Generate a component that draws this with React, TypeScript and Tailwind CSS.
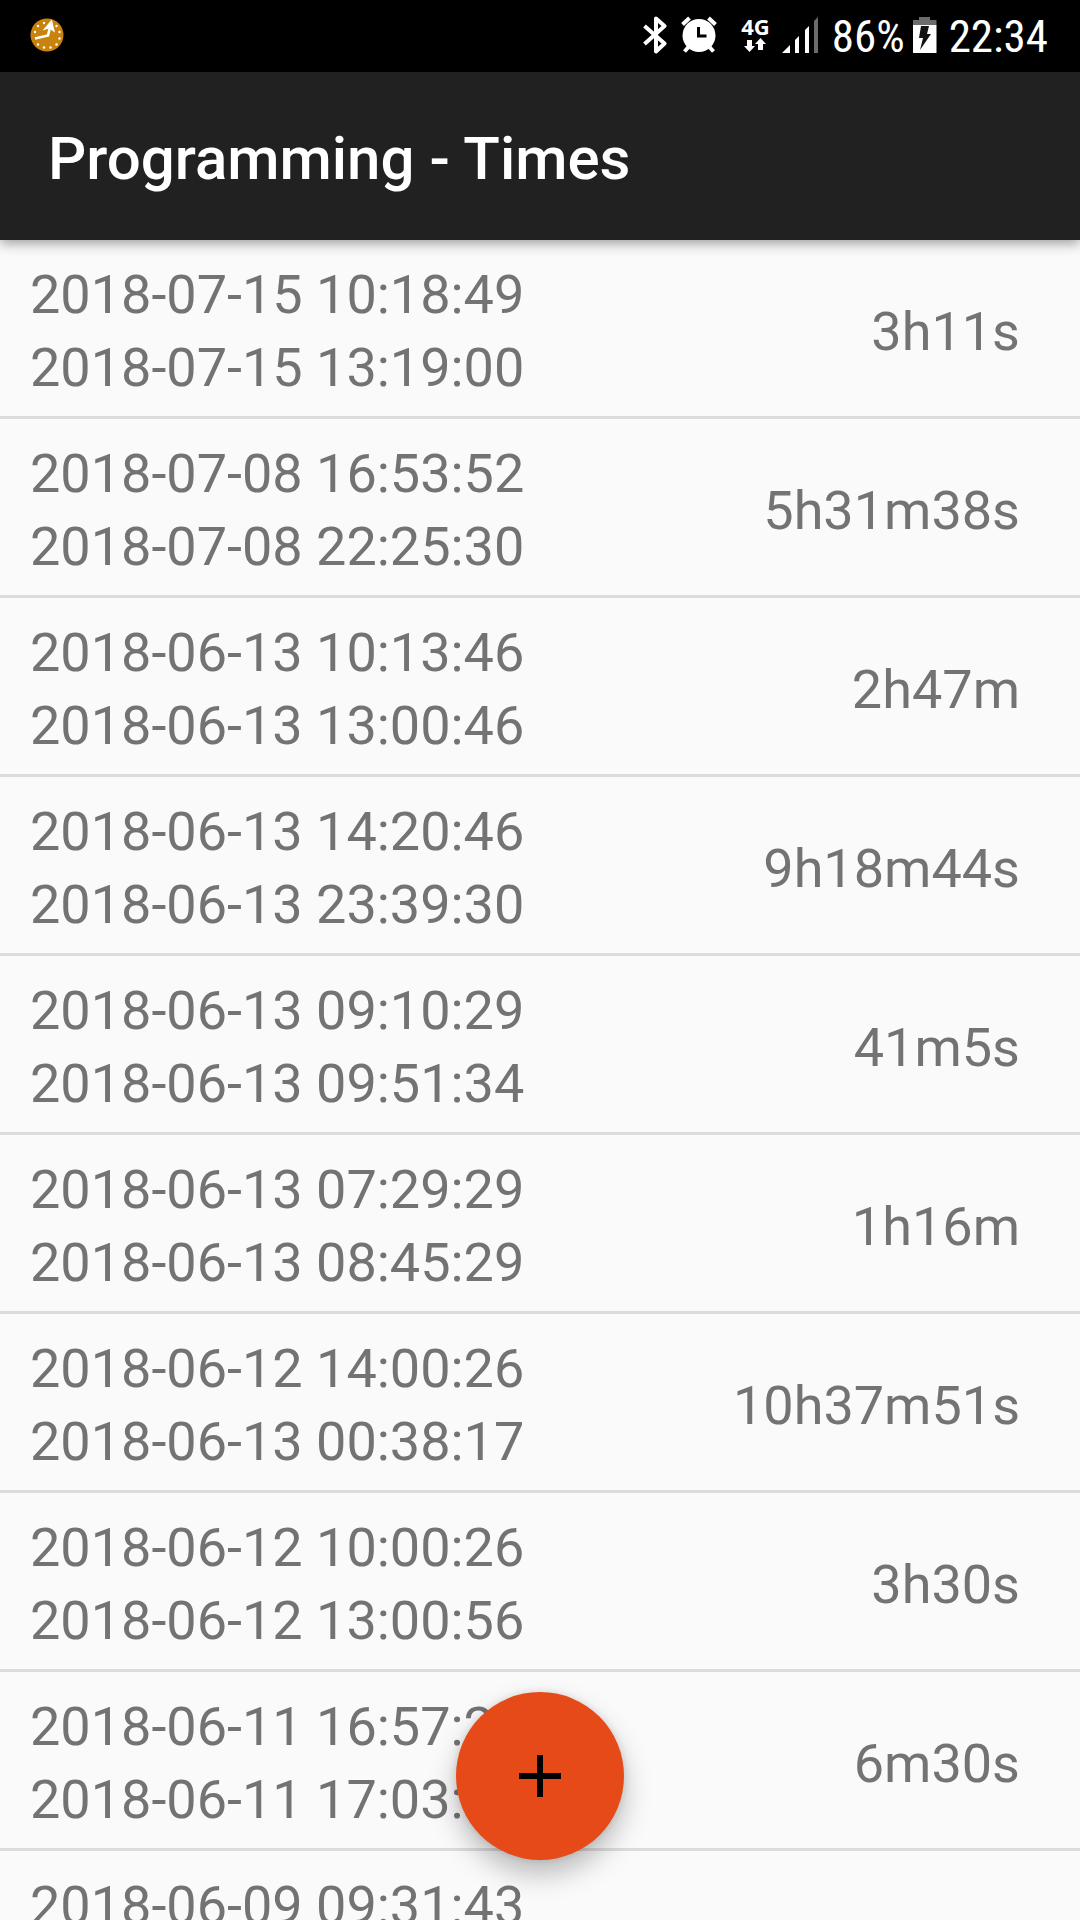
type Entry = { start: string; end?: string; duration?: string };

const entries: Entry[] = [
  { start: "2018-07-15 10:18:49", end: "2018-07-15 13:19:00", duration: "3h11s" },
  { start: "2018-07-08 16:53:52", end: "2018-07-08 22:25:30", duration: "5h31m38s" },
  { start: "2018-06-13 10:13:46", end: "2018-06-13 13:00:46", duration: "2h47m" },
  { start: "2018-06-13 14:20:46", end: "2018-06-13 23:39:30", duration: "9h18m44s" },
  { start: "2018-06-13 09:10:29", end: "2018-06-13 09:51:34", duration: "41m5s" },
  { start: "2018-06-13 07:29:29", end: "2018-06-13 08:45:29", duration: "1h16m" },
  { start: "2018-06-12 14:00:26", end: "2018-06-13 00:38:17", duration: "10h37m51s" },
  { start: "2018-06-12 10:00:26", end: "2018-06-12 13:00:56", duration: "3h30s" },
  { start: "2018-06-11 16:57:20", end: "2018-06-11 17:03:50", duration: "6m30s" },
  { start: "2018-06-09 09:31:43" },
];

const clockDots = [
  [44, 23], [38, 26], [35, 32], [38, 44.5], [44, 47.5],
  [50.5, 47.5], [56.5, 44.5], [59.5, 38.5], [59.5, 32], [56.5, 26],
];

function ClockNotification() {
  return (
    <svg className="h-[34px] w-[34px]" viewBox="30 18 34 34" aria-hidden="true">
      <circle cx="47" cy="35" r="16.5" fill="#c8830c" />
      {clockDots.map(([x, y]) => (
        <circle key={`${x}-${y}`} cx={x} cy={y} r="1.2" fill="#fff" />
      ))}
      <path d="M35 38.5L48 35.5L50.5 25" fill="none" stroke="#fff" strokeWidth="2.6" />
      <path d="M51.8 19.5L42.5 30.5L49 28.5L55 32.5Z" fill="#fff" />
    </svg>
  );
}

function Bluetooth() {
  return (
    <svg className="h-[38px] w-[24px]" viewBox="0 0 24 38" fill="none" stroke="#fff" strokeWidth="4" aria-label="Bluetooth">
      <path d="M1.5 10L21.5 27.5L13 35.5V2.5L21.5 10L1.5 28" strokeLinejoin="round" />
    </svg>
  );
}

function Alarm() {
  return (
    <svg className="h-[38px] w-[36px]" viewBox="0 0 36 38" fill="none" stroke="#fff" strokeWidth="4" aria-label="Alarm">
      <circle cx="18" cy="19.5" r="16.5" fill="#fff" stroke="none" />
      <path d="M1.5 8.5L8.5 2M34.5 8.5L27.5 2M3.5 35.5L8 30.5M32.5 35.5L28 30.5" />
      <path d="M17.5 11V20H25.5" stroke="#000" strokeWidth="3" />
    </svg>
  );
}

function MobileData() {
  return (
    <div className="flex flex-col items-center gap-1">
      <span className="font-['Noto_Sans',sans-serif] text-[22px] leading-[16px] font-bold">4G</span>
      <svg className="h-[14px] w-[22px]" viewBox="0 0 22 14" fill="#fff" aria-hidden="true">
        <path d="M3 2H8V8H11L5.5 14L0 8H3ZM14 12H19V6H22L16.5 0L11 6H14Z" />
      </svg>
    </div>
  );
}

function Signal() {
  return (
    <svg className="h-[36px] w-[36px]" viewBox="0 0 36 36" fill="#fff" aria-label="Signal">
      <path d="M0 36L8 28V36ZM13 23L17 19V36H13ZM23 13L27 9V36H23Z" />
      <path d="M32 4L36 0V36H32Z" fill="#6b6b6b" />
    </svg>
  );
}

function Battery() {
  return (
    <svg className="h-[36px] w-[24px]" viewBox="0 0 24 36" aria-label="Charging">
      <path d="M6 0H17V3H23.5V8H0V3H6Z" fill="#6b6b6b" />
      <path d="M0 8H23.5V36H0Z" fill="#fff" />
      <path d="M8 9H16L14 17H18L7 33L10 21H6Z" fill="#111" />
    </svg>
  );
}

export default function App() {
  return (
    <div className="flex h-screen flex-col overflow-hidden bg-[#fafafa] font-[Roboto,sans-serif]">
      <div className="flex h-[72px] shrink-0 items-center justify-between bg-black pr-8 pb-0.5 pl-[30px] text-white">
        <ClockNotification />
        <div className="flex items-center font-['Roboto_Condensed','Liberation_Sans_Narrow',Roboto,sans-serif] text-[45px] leading-[66px]">
          <Bluetooth />
          <span className="ml-3.5 flex"><Alarm /></span>
          <span className="ml-6 flex"><MobileData /></span>
          <span className="ml-3 flex"><Signal /></span>
          <span className="ml-3.5 pt-1">86%</span>
          <span className="ml-2 flex"><Battery /></span>
          <span className="ml-3 pt-1">22:34</span>
        </div>
      </div>

      <header className="z-10 flex h-[168px] shrink-0 items-center bg-[#212121] px-12 pt-1.5 shadow-[0_3px_12px_rgba(0,0,0,0.4)]">
        <h1 className="text-[60px] leading-[72px] font-medium text-white">Programming - Times</h1>
      </header>

      <main className="min-h-0 flex-1 overflow-y-auto [scrollbar-width:none]">
        <ul>
          {entries.map((entry) => (
            <li
              key={entry.start}
              className="flex items-center justify-between border-b-[3px] border-[#dcdcdc] pt-[18px] pr-[60px] pb-3 pl-[30px] text-[54px] leading-[73px] text-[#737373]"
            >
              <div>
                <p>{entry.start}</p>
                {entry.end && <p>{entry.end}</p>}
              </div>
              {entry.duration && <p>{entry.duration}</p>}
            </li>
          ))}
        </ul>
      </main>

      <button
        type="button"
        aria-label="Add time"
        className="fixed inset-x-0 bottom-[60px] z-20 mx-auto flex size-[168px] items-center justify-center rounded-full bg-[#e64a19] shadow-[0_14px_28px_rgba(0,0,0,0.26),0_0_8px_rgba(0,0,0,0.12)]"
      >
        <svg className="size-[42px]" viewBox="0 0 42 42" aria-hidden="true">
          <path d="M18 0H24V18H42V24H24V42H18V24H0V18H18Z" />
        </svg>
      </button>
    </div>
  );
}
